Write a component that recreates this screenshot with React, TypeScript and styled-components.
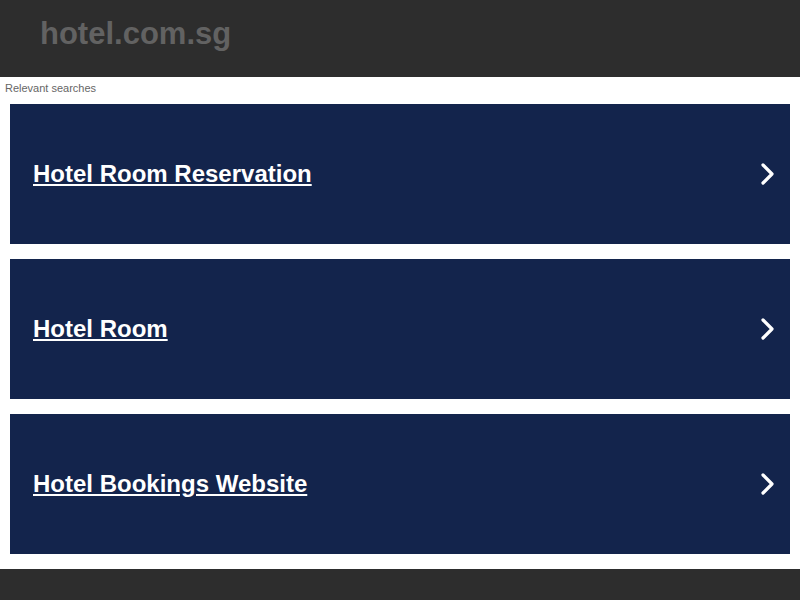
import React from "react";
import styled, { createGlobalStyle } from "styled-components";

const Global = createGlobalStyle`
  html, body { margin: 0; padding: 0; background: #fff; }
  body { font-family: "Liberation Sans", Arial, sans-serif; }
`;

const Header = styled.header`
  height: 77px;
  background: #2d2d2d;
  padding: 0 40px;
  box-sizing: border-box;
`;

const Title = styled.h1`
  margin: 0;
  padding-top: 15px;
  font-size: 31px;
  line-height: 38px;
  font-weight: bold;
  color: #626262;
`;

const Label = styled.div`
  font-size: 11px;
  color: #666;
  padding: 5px 5px 0;
  line-height: 13px;
  height: 27px;
  box-sizing: border-box;
`;

const List = styled.div`
  display: flex;
  flex-direction: column;
  gap: 15px;
  padding: 0 10px 15px;
`;

const Card = styled.a`
  display: flex;
  align-items: center;
  justify-content: space-between;
  height: 140px;
  background: #13244c;
  padding: 0 14px 0 23px;
  box-sizing: border-box;
  color: #fff;
  text-decoration: none;
`;

const CardText = styled.span`
  font-size: 24px;
  font-weight: bold;
  color: #fff;
  text-decoration: underline;
`;

const Footer = styled.footer`
  height: 31px;
  background: #2d2d2d;
`;

const Chevron = () => (
  <svg width="16" height="22" viewBox="0 0 16 22">
    <path d="M3 2 L12 11 L3 20" stroke="#fff" strokeWidth="3.2" fill="none" strokeLinecap="round" strokeLinejoin="round" />
  </svg>
);

const items = ["Hotel Room Reservation", "Hotel Room", "Hotel Bookings Website"];

export default function App() {
  return (
    <>
      <Global />
      <Header>
        <Title>hotel.com.sg</Title>
      </Header>
      <Label>Relevant searches</Label>
      <List>
        {items.map((t) => (
          <Card key={t} href="#">
            <CardText>{t}</CardText>
            <Chevron />
          </Card>
        ))}
      </List>
      <Footer />
    </>
  );
}
